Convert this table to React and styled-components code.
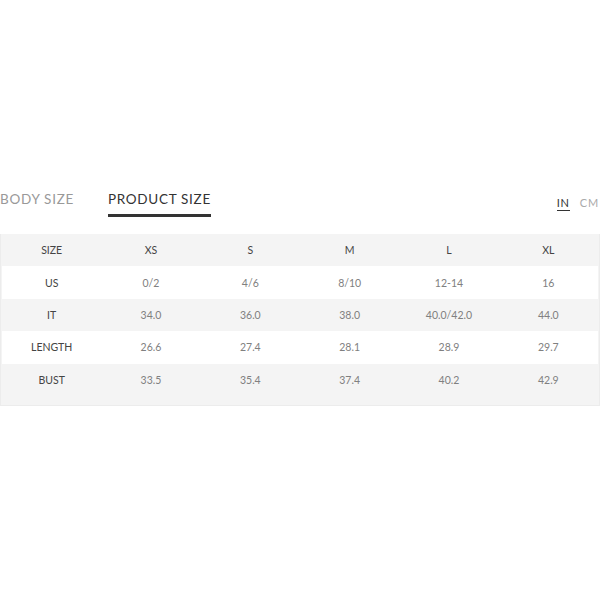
import React from "react";
import styled, { createGlobalStyle } from "styled-components";

const Global = createGlobalStyle`
  html, body { margin: 0; padding: 0; background: #fff; }
  body { font-family: Lato, "Open Sans", sans-serif; }
`;

const Page = styled.div`
  width: 600px;
  height: 600px;
  padding-top: 189px;
  box-sizing: border-box;
  overflow: hidden;
`;

const TabBar = styled.div`
  display: flex;
  align-items: flex-start;
  justify-content: space-between;
  height: 45px;
`;

const Tabs = styled.div`
  display: flex;
  gap: 34px;
`;

const Tab = styled.div`
  font-size: 13.5px;
  letter-spacing: 0.7px;
  color: ${(p) => (p.$active ? "#333" : "#999")};
  padding-bottom: 5px;
  border-bottom: 3px solid ${(p) => (p.$active ? "#333" : "transparent")};
  line-height: 20px;
`;

const Units = styled.div`
  display: flex;
  gap: 10px;
  padding-top: 7px;
  padding-right: 1px;
`;

const Unit = styled.div`
  font-size: 11px;
  letter-spacing: 0.8px;
  line-height: 14px;
  color: ${(p) => (p.$active ? "#333" : "#aaa")};
  border-bottom: 1px solid ${(p) => (p.$active ? "#333" : "transparent")};
`;

const TableBox = styled.div`
  background: #f4f4f4;
  border: 1px solid #ececec;
  border-top: none;
  padding: 0 1px 9px 1px;
`;

const Row = styled.div`
  display: grid;
  grid-template-columns: repeat(6, 1fr);
  height: 32.4px;
  align-items: center;
  background: ${(p) => (p.$white ? "#fff" : "transparent")};
`;

const Cell = styled.div`
  text-align: center;
  font-size: 10.5px;
  color: ${(p) => (p.$label ? "#444" : "#808080")};
`;

const header = ["SIZE", "XS", "S", "M", "L", "XL"];
const rows = [
  ["US", "0/2", "4/6", "8/10", "12-14", "16"],
  ["IT", "34.0", "36.0", "38.0", "40.0/42.0", "44.0"],
  ["LENGTH", "26.6", "27.4", "28.1", "28.9", "29.7"],
  ["BUST", "33.5", "35.4", "37.4", "40.2", "42.9"],
];

export default function App() {
  return (
    <Page>
      <Global />
      <TabBar>
        <Tabs>
          <Tab>BODY SIZE</Tab>
          <Tab $active>PRODUCT SIZE</Tab>
        </Tabs>
        <Units>
          <Unit $active>IN</Unit>
          <Unit>CM</Unit>
        </Units>
      </TabBar>
      <TableBox>
        <Row>
          {header.map((h) => (
            <Cell key={h} $label>{h}</Cell>
          ))}
        </Row>
        {rows.map((r, i) => (
          <Row key={r[0]} $white={i % 2 === 0}>
            {r.map((c, j) => (
              <Cell key={j} $label={j === 0}>{c}</Cell>
            ))}
          </Row>
        ))}
      </TableBox>
    </Page>
  );
}
